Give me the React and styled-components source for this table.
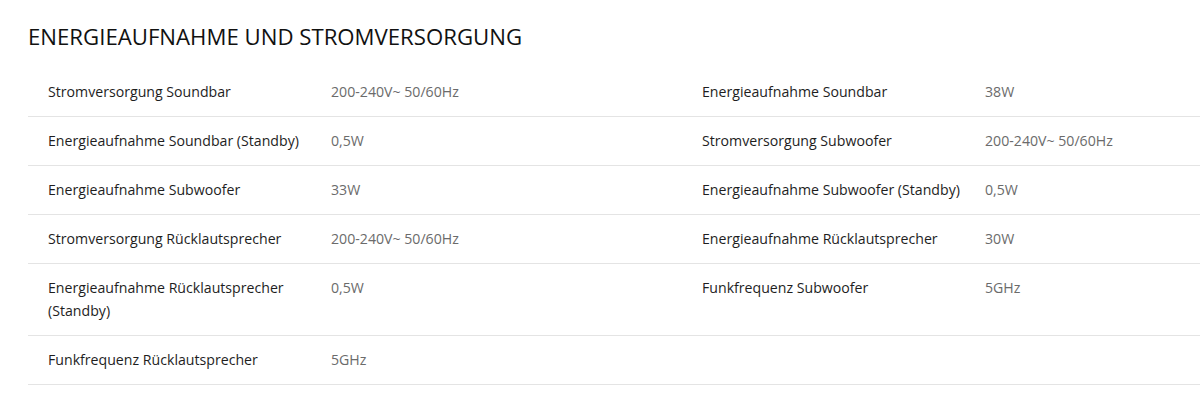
import React from 'react';
import styled, { createGlobalStyle } from 'styled-components';

const GlobalStyle = createGlobalStyle`
  body {
    margin: 0;
    background: #fff;
    font-family: "Open Sans", "Liberation Sans", sans-serif;
    overflow: hidden;
  }
`;

const Section = styled.section`
  padding: 22px 0 0 28px;
  width: 1340px;
`;

const Title = styled.h2`
  margin: 0 0 16px 0;
  font-size: 22.2px;
  font-weight: 400;
  line-height: 30px;
  color: #111;
`;

const Table = styled.div`
  display: grid;
  grid-template-columns: 283px 371px 283px 1fr;
`;

const Cell = styled.div`
  padding: 12px 2px 13px 20px;
  font-size: 14.15px;
  line-height: 23px;
  color: ${(p) => (p.$value ? '#6b6b6b' : '#1e1e1e')};
  border-bottom: 1px solid #e4e4e4;
`;

const rows = [
  ['Stromversorgung Soundbar', '200-240V~ 50/60Hz', 'Energieaufnahme Soundbar', '38W'],
  ['Energieaufnahme Soundbar (Standby)', '0,5W', 'Stromversorgung Subwoofer', '200-240V~ 50/60Hz'],
  ['Energieaufnahme Subwoofer', '33W', 'Energieaufnahme Subwoofer (Standby)', '0,5W'],
  ['Stromversorgung Rücklautsprecher', '200-240V~ 50/60Hz', 'Energieaufnahme Rücklautsprecher', '30W'],
  ['Energieaufnahme Rücklautsprecher (Standby)', '0,5W', 'Funkfrequenz Subwoofer', '5GHz'],
  ['Funkfrequenz Rücklautsprecher', '5GHz', '', ''],
];

export default function App() {
  return (
    <>
      <GlobalStyle />
      <Section>
        <Title>ENERGIEAUFNAHME UND STROMVERSORGUNG</Title>
        <Table>
          {rows.map((r, i) => (
            <React.Fragment key={i}>
              <Cell>{r[0]}</Cell>
              <Cell $value>{r[1]}</Cell>
              <Cell>{r[2]}</Cell>
              <Cell $value>{r[3]}</Cell>
            </React.Fragment>
          ))}
        </Table>
      </Section>
    </>
  );
}
